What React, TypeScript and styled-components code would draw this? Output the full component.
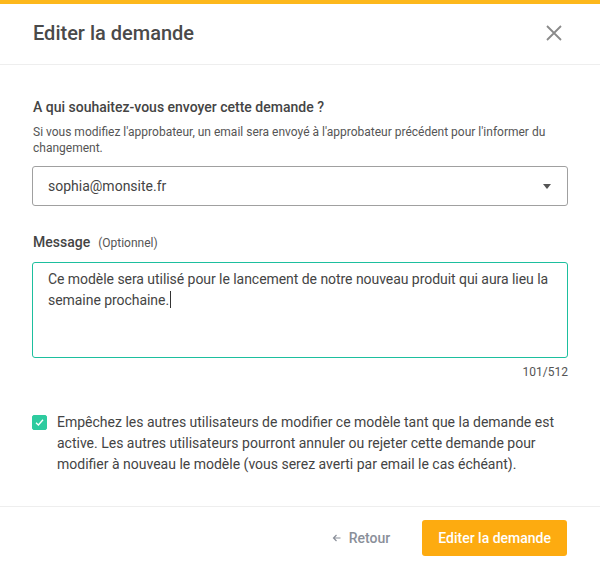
import React from 'react';
import styled, { createGlobalStyle } from 'styled-components';

const GlobalStyle = createGlobalStyle`
  html, body {
    margin: 0;
    padding: 0;
    background: #fff;
  }
  body {
    font-family: Roboto, "Liberation Sans", Arial, sans-serif;
    color: #444;
  }
  * {
    box-sizing: border-box;
  }
`;

const Modal = styled.div`
  width: 600px;
  height: 570px;
  display: flex;
  flex-direction: column;
  background: #fff;
  border-top: 4px solid #fdb81c;
  border-radius: 0 0 4px 4px;
  overflow: hidden;
`;

const Header = styled.div`
  height: 61px;
  display: flex;
  align-items: center;
  justify-content: space-between;
  padding: 0 36px 3px 33px;
  border-bottom: 1px solid #eeeeee;
`;

const Title = styled.h2`
  margin: 0;
  font-size: 20px;
  font-weight: 500;
  color: #4a4a4a;
`;

const CloseButton = styled.button`
  display: flex;
  align-items: center;
  justify-content: center;
  width: 20px;
  height: 20px;
  padding: 0;
  border: none;
  background: none;
  cursor: pointer;
`;

const Body = styled.div`
  flex: 1;
  display: flex;
  flex-direction: column;
  padding: 32px 32px 0 32px;
  border-bottom: 1px solid #eeeeee;
`;

const Label = styled.div`
  display: flex;
  align-items: baseline;
  gap: 8px;
  font-size: 14px;
  line-height: 20px;
  font-weight: 500;
  color: #444;
  padding-left: 1px;
`;

const Optional = styled.span`
  font-size: 12px;
  font-weight: 400;
  color: #555;
`;

const Help = styled.p`
  margin: 7px 0 0 1px;
  font-size: 12px;
  line-height: 16px;
  color: #555;
`;

const Select = styled.div`
  margin-top: 10px;
  height: 40px;
  display: flex;
  align-items: center;
  justify-content: space-between;
  padding: 0 16px 0 15px;
  border: 1px solid #a0a0a0;
  border-radius: 3px;
  font-size: 14px;
  color: #444;
`;

const Caret = styled.span`
  width: 0;
  height: 0;
  border-left: 4px solid transparent;
  border-right: 4px solid transparent;
  border-top: 5px solid #555;
`;

const MessageLabel = styled(Label)`
  margin-top: 26px;
`;

const TextArea = styled.div`
  margin-top: 9px;
  height: 96px;
  padding: 6px 8px 6px 15px;
  border: 1px solid #1dbf9e;
  border-radius: 3px;
  font-size: 14px;
  line-height: 21px;
  letter-spacing: -0.05px;
  color: #444;
`;

const TextCaret = styled.span`
  display: inline-block;
  width: 1px;
  height: 17px;
  margin-left: 1px;
  vertical-align: -3px;
  background: #333;
`;

const Counter = styled.div`
  margin-top: 6px;
  text-align: right;
  font-size: 12px;
  line-height: 16px;
  color: #555;
`;

const CheckRow = styled.label`
  margin-top: 32px;
  display: flex;
  align-items: flex-start;
  gap: 10px;
  font-size: 14px;
  line-height: 21px;
  color: #444;
  cursor: pointer;
`;

const Box = styled.span<{ $checked: boolean }>`
  flex: none;
  width: 15px;
  height: 15px;
  margin-top: 3px;
  display: flex;
  align-items: center;
  justify-content: center;
  border-radius: 2px;
  background: ${(p) => (p.$checked ? '#2ecb9f' : '#fff')};
  border: 1px solid ${(p) => (p.$checked ? '#2ecb9f' : '#aaa')};
`;

const Footer = styled.div`
  height: 63px;
  display: flex;
  align-items: center;
  justify-content: flex-end;
  gap: 32px;
  padding: 0 33px 1px 0;
`;

const BackButton = styled.button`
  display: flex;
  align-items: center;
  gap: 8px;
  padding: 0;
  border: none;
  background: none;
  font-family: inherit;
  font-size: 14px;
  font-weight: 500;
  color: #8a8f99;
  cursor: pointer;
`;

const PrimaryButton = styled.button`
  height: 36px;
  padding: 0 16px;
  border: none;
  border-radius: 3px;
  background: #fdab10;
  color: #fff;
  font-family: inherit;
  font-size: 14px;
  font-weight: 500;
  cursor: pointer;
`;

export default function App() {
  const checked = true;
  return (
    <>
      <GlobalStyle />
      <Modal>
        <Header>
          <Title>Editer la demande</Title>
          <CloseButton aria-label="Fermer">
            <svg width="16" height="16" viewBox="0 0 16 16">
              <path d="M1 1 L15 15 M15 1 L1 15" stroke="#8a8a8a" strokeWidth="1.8" />
            </svg>
          </CloseButton>
        </Header>
        <Body>
          <Label>A qui souhaitez-vous envoyer cette demande ?</Label>
          <Help>
            Si vous modifiez l'approbateur, un email sera envoyé à l'approbateur précédent pour l'informer du
            changement.
          </Help>
          <Select>
            <span>sophia@monsite.fr</span>
            <Caret />
          </Select>
          <MessageLabel>
            Message <Optional>(Optionnel)</Optional>
          </MessageLabel>
          <TextArea>
            Ce modèle sera utilisé pour le lancement de notre nouveau produit qui aura lieu la semaine prochaine.
            <TextCaret />
          </TextArea>
          <Counter>101/512</Counter>
          <CheckRow>
            <Box $checked={checked}>
              <svg width="9" height="9" viewBox="0 0 9 9">
                <path d="M1 4.8 L3.4 7 L8 1.8" stroke="#fff" strokeWidth="1.4" fill="none" />
              </svg>
            </Box>
            <span>
              Empêchez les autres utilisateurs de modifier ce modèle tant que la demande est active. Les autres
              utilisateurs pourront annuler ou rejeter cette demande pour modifier à nouveau le modèle (vous serez
              averti par email le cas échéant).
            </span>
          </CheckRow>
        </Body>
        <Footer>
          <BackButton>
            <svg width="9" height="8" viewBox="0 0 9 8">
              <path d="M8.5 4 H1.5 M4.5 1 L1.5 4 L4.5 7" stroke="#8a8f99" strokeWidth="1.2" fill="none" />
            </svg>
            Retour
          </BackButton>
          <PrimaryButton>Editer la demande</PrimaryButton>
        </Footer>
      </Modal>
    </>
  );
}
